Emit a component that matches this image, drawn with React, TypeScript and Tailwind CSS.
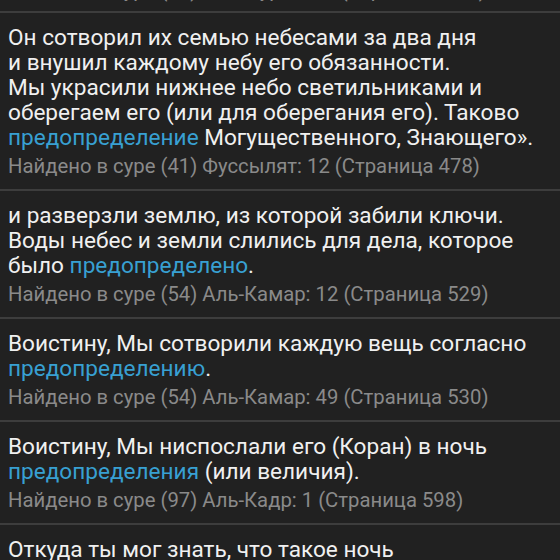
type Part = string | { hl: string };

type Verse = {
  lines: Part[][];
  found: string;
};

const verses: Verse[] = [
  {
    lines: [
      ["Он сотворил их семью небесами за два дня"],
      ["и внушил каждому небу его обязанности."],
      ["Мы украсили нижнее небо светильниками и"],
      ["оберегаем его (или для оберегания его). Таково"],
      [{ hl: "предопределение" }, " Могущественного, Знающего»."],
    ],
    found: "Найдено в суре (41) Фуссылят: 12 (Страница 478)",
  },
  {
    lines: [
      ["и разверзли землю, из которой забили ключи."],
      ["Воды небес и земли слились для дела, которое"],
      ["было ", { hl: "предопределено" }, "."],
    ],
    found: "Найдено в суре (54) Аль-Камар: 12 (Страница 529)",
  },
  {
    lines: [
      ["Воистину, Мы сотворили каждую вещь согласно"],
      [{ hl: "предопределению" }, "."],
    ],
    found: "Найдено в суре (54) Аль-Камар: 49 (Страница 530)",
  },
  {
    lines: [
      ["Воистину, Мы ниспослали его (Коран) в ночь"],
      [{ hl: "предопределения" }, " (или величия)."],
    ],
    found: "Найдено в суре (97) Аль-Кадр: 1 (Страница 598)",
  },
  {
    lines: [
      ["Откуда ты мог знать, что такое ночь"],
      [{ hl: "предопределения" }, "?"],
    ],
    found: "Найдено в суре (97) Аль-Кадр: 2 (Страница 598)",
  },
];

function VerseRow({ verse }: { verse: Verse }) {
  return (
    <div className="border-t-2 border-[#3d3d3d] px-2 pt-3 pb-[10px]">
      <div className="text-[22.6px] leading-[25px] text-[#f0f0f0]">
        {verse.lines.map((line, i) => (
          <div key={i} className="whitespace-nowrap">
            {line.map((part, j) =>
              typeof part === "string" ? (
                <span key={j}>{part}</span>
              ) : (
                <span key={j} className="text-[#38a0d2]">
                  {part.hl}
                </span>
              )
            )}
          </div>
        ))}
      </div>
      <div className="mt-[3px] text-[20.3px] leading-[26px] text-[#8a8a8a] whitespace-nowrap">
        {verse.found}
      </div>
    </div>
  );
}

export default function App() {
  return (
    <div
      className="h-[560px] w-[560px] overflow-hidden bg-[#212121]"
      style={{ fontFamily: "Roboto, 'Noto Sans', sans-serif" }}
    >
      {/* previous result, only its last line peeks in */}
      <div className="-mt-[23px] px-2 pb-[8px]">
        <div className="text-[20.3px] leading-[26px] text-[#8a8a8a] whitespace-nowrap">
          Найдено в суре (25) Аль-Фуркан: 2 (Страница 359)
        </div>
      </div>

      {verses.map((v, i) => (
        <VerseRow key={i} verse={v} />
      ))}
    </div>
  );
}
